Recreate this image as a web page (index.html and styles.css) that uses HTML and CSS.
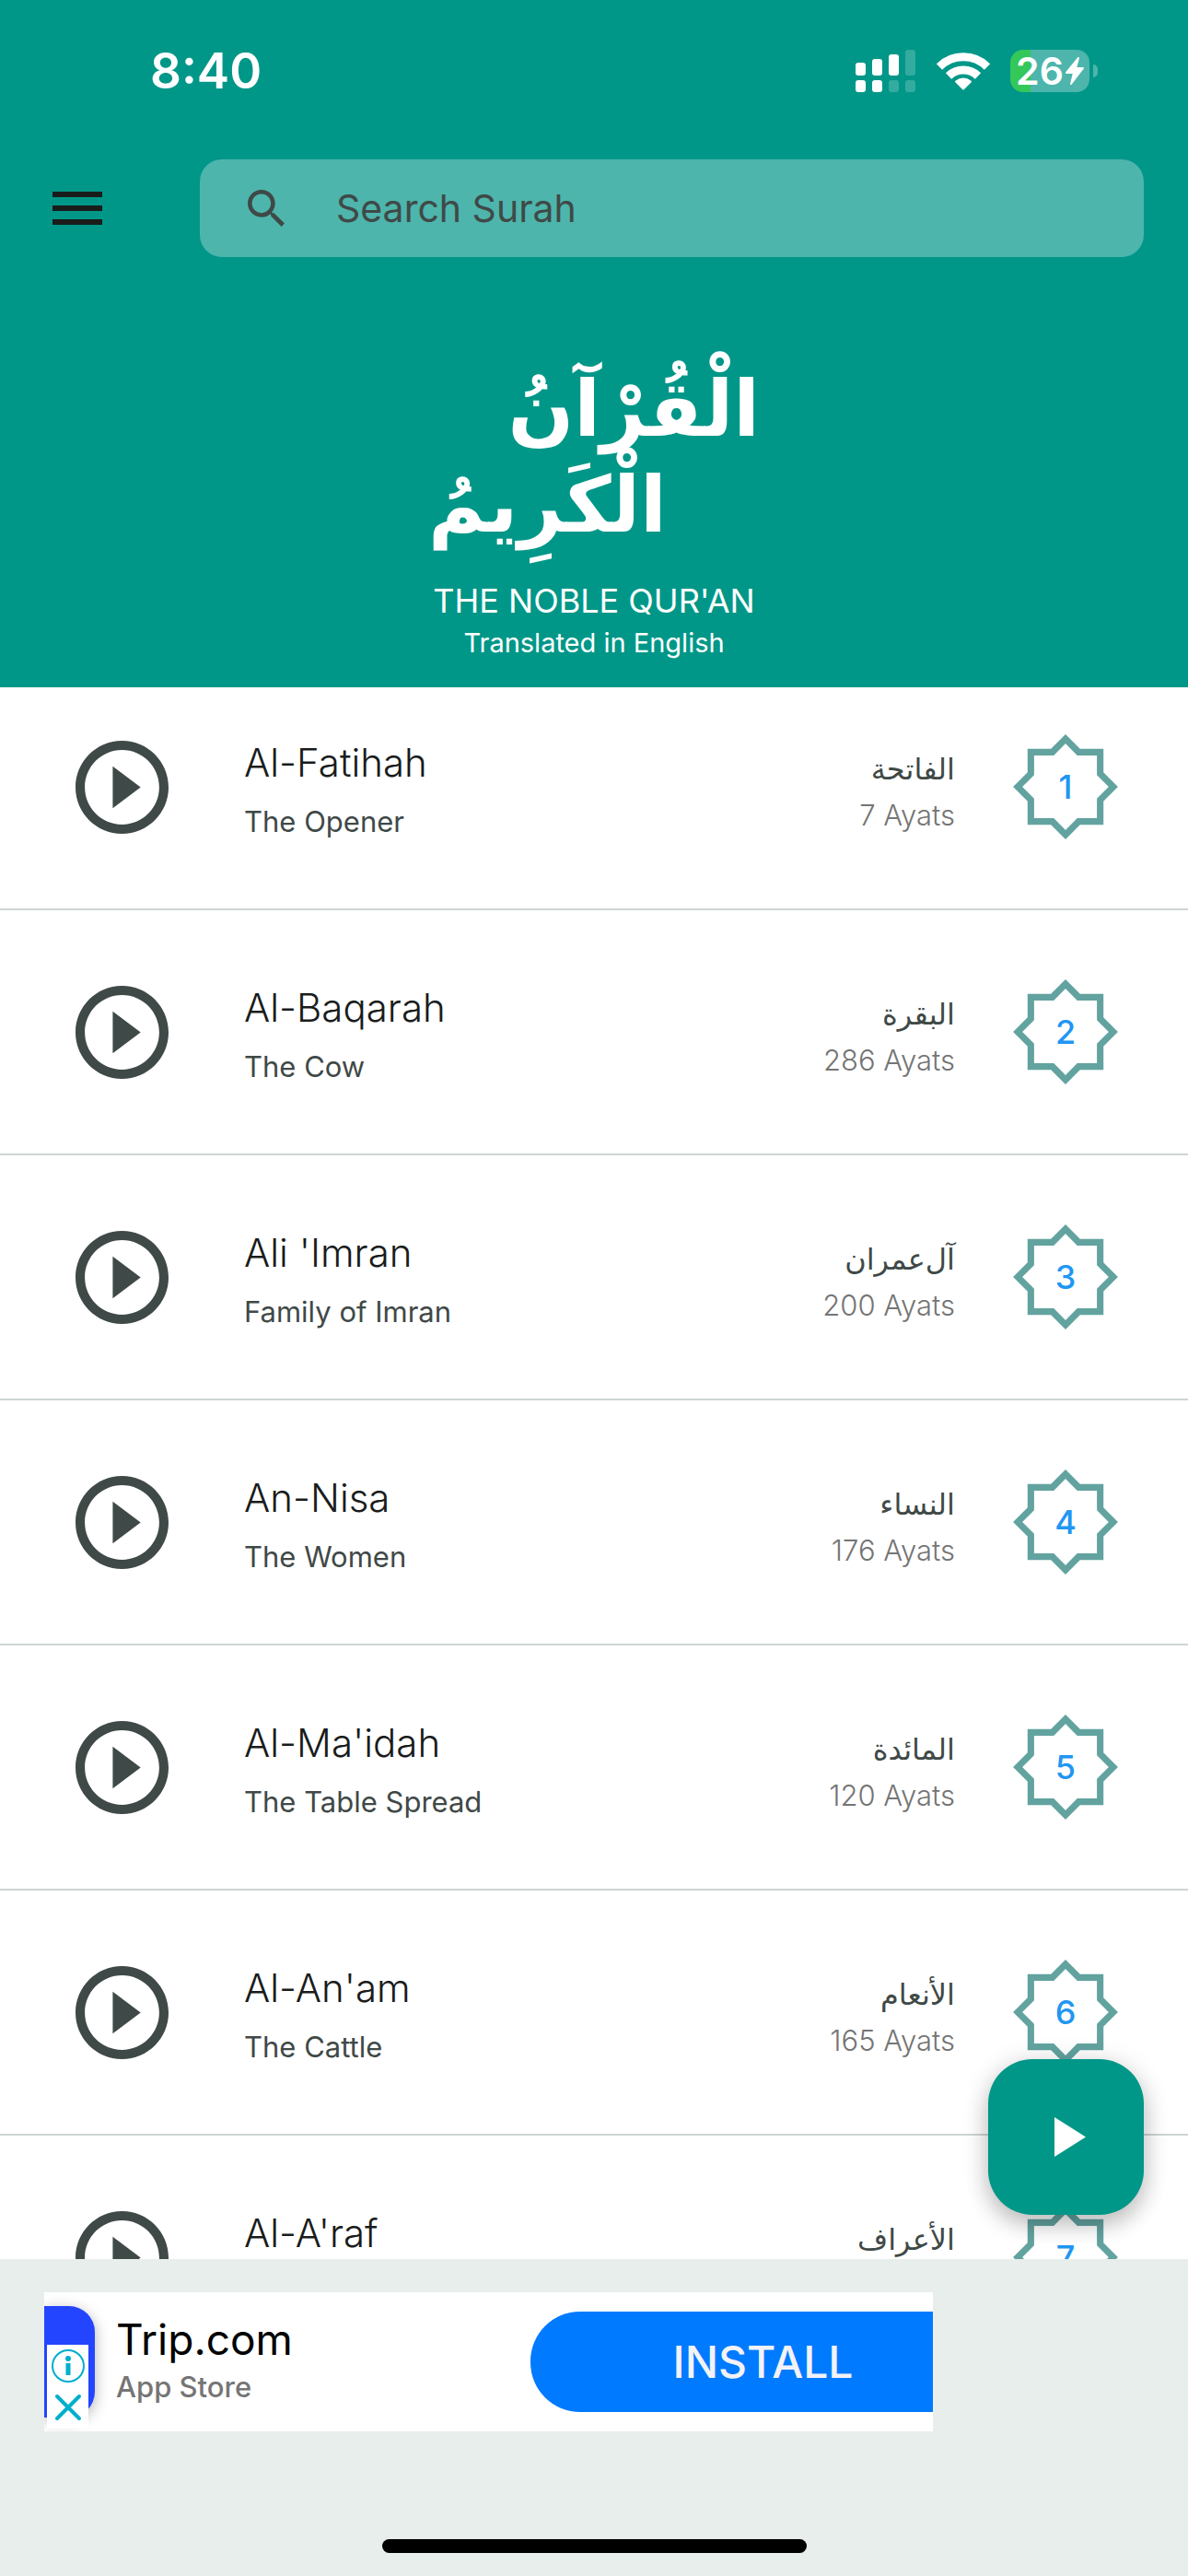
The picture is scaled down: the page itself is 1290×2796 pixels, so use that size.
FILE: index.html
```
<!DOCTYPE html>
<html lang="en">
<head>
    <meta charset="UTF-8">
    <meta name="viewport" content="width=device-width, initial-scale=1.0">
    <title>The Noble Qur'an</title>
    <link rel="stylesheet" href="styles.css">
</head>
<body>
    <!-- shared icons -->
    <svg class="sprite" aria-hidden="true">
        <symbol id="play-circle" viewBox="2 2 20 20">
            <path d="M10 16.5l6-4.5-6-4.5v9zM12 2C6.48 2 2 6.48 2 12s4.48 10 10 10 10-4.48 10-10S17.52 2 12 2zm0 18c-4.41 0-8-3.59-8-8s3.59-8 8-8 8 3.59 8 8-3.59 8-8 8z"/>
        </symbol>
        <symbol id="star" viewBox="0 0 112 112">
            <polygon points="56,5 70,19 93,19 93,42 107,56 93,70 93,93 70,93 56,107 42,93 19,93 19,70 5,56 19,42 19,19 42,19" fill="none" stroke="#62a3a0" stroke-width="7"/>
        </symbol>
    </svg>

    <header class="header">
        <div class="status-bar">
            <span class="clock">8:40</span>
            <div class="status-icons">
                <svg class="signal" viewBox="0 0 66 46" fill="#fff">
                    <rect x="0" y="14" width="11" height="14" rx="3"/>
                    <rect x="18" y="10" width="11" height="18" rx="3"/>
                    <rect x="36" y="5" width="11" height="23" rx="3"/>
                    <rect x="54" y="0" width="11" height="28" rx="3" opacity=".2"/>
                    <rect x="0" y="33" width="11" height="13" rx="3"/>
                    <rect x="18" y="33" width="11" height="13" rx="3"/>
                    <rect x="36" y="33" width="11" height="13" rx="3" opacity=".2"/>
                    <rect x="54" y="33" width="11" height="13" rx="3" opacity=".2"/>
                </svg>
                <svg class="wifi" viewBox="0 0 58 43" fill="none" stroke="#fff" stroke-width="9">
                    <path d="M3 17.5A37 37 0 0 1 55 17.5"/>
                    <path d="M13 27.500A23 23 0 0 1 45 27.500"/>
                    <path d="M29 41.500L21 33.500Q29 27.500 37 33.500Z" fill="#fff" stroke-width="2" stroke-linejoin="round"/>
                </svg>
                <div class="battery">
                    <div class="battery-body">
                        <span>26</span>
                        <svg class="bolt" viewBox="0 0 20 30" fill="#fff" stroke="#fff" stroke-width="2" stroke-linejoin="round"><path d="M14 1L1 17h8L6 29 19 12h-8z"/></svg>
                    </div>
                    <div class="battery-cap"></div>
                </div>
            </div>
        </div>

        <div class="toolbar">
            <button class="menu-button" aria-label="Menu">
                <svg viewBox="0 0 54 36" fill="#191c1b"><path d="M0 0h54v6H0zM0 15h54v6H0zM0 30h54v6H0z"/></svg>
            </button>
            <label class="search">
                <svg class="search-icon" viewBox="3 3 17.500 17.500" fill="#3f4947"><path d="M15.500 14h-.79l-.28-.27C15.410 12.590 16 11.110 16 9.500 16 5.910 13.090 3 9.500 3S3 5.910 3 9.500 5.910 16 9.500 16c1.610 0 3.090-.59 4.230-1.570l.27.28v.79l5 4.990L20.490 19l-4.990-5zm-6 0C7.010 14 5 11.990 5 9.500S7.010 5 9.500 5 14 7.010 14 9.500 11.990 14 9.500 14z"/></svg>
                <input type="text" placeholder="Search Surah" aria-label="Search Surah">
            </label>
        </div>

        <div class="brand">
            <div class="calligraphy" lang="ar" dir="rtl">
                <span class="word">الْقُرْآنُ</span>
                <span class="word word-end">الْكَرِيمُ</span>
            </div>
            <h1>THE NOBLE QUR'AN</h1>
            <p>Translated in English</p>
        </div>
    </header>

    <main class="content">
        <ul class="surah-list">
            <li class="surah">
                <button class="play" aria-label="Play Al-Fatihah"><svg><use href="#play-circle"/></svg></button>
                <div class="name"><h2>Al-Fatihah</h2><p>The Opener</p></div>
                <div class="arabic"><p lang="ar" dir="rtl">الفاتحة</p><small>7 Ayats</small></div>
                <div class="number"><svg><use href="#star"/></svg><span>1</span></div>
            </li>
            <li class="surah">
                <button class="play" aria-label="Play Al-Baqarah"><svg><use href="#play-circle"/></svg></button>
                <div class="name"><h2>Al-Baqarah</h2><p>The Cow</p></div>
                <div class="arabic"><p lang="ar" dir="rtl">البقرة</p><small>286 Ayats</small></div>
                <div class="number"><svg><use href="#star"/></svg><span>2</span></div>
            </li>
            <li class="surah">
                <button class="play" aria-label="Play Ali 'Imran"><svg><use href="#play-circle"/></svg></button>
                <div class="name"><h2>Ali 'Imran</h2><p>Family of Imran</p></div>
                <div class="arabic"><p lang="ar" dir="rtl">آل&zwnj;عمران</p><small>200 Ayats</small></div>
                <div class="number"><svg><use href="#star"/></svg><span>3</span></div>
            </li>
            <li class="surah">
                <button class="play" aria-label="Play An-Nisa"><svg><use href="#play-circle"/></svg></button>
                <div class="name"><h2>An-Nisa</h2><p>The Women</p></div>
                <div class="arabic"><p lang="ar" dir="rtl">النساء</p><small>176 Ayats</small></div>
                <div class="number"><svg><use href="#star"/></svg><span>4</span></div>
            </li>
            <li class="surah">
                <button class="play" aria-label="Play Al-Ma'idah"><svg><use href="#play-circle"/></svg></button>
                <div class="name"><h2>Al-Ma'idah</h2><p>The Table Spread</p></div>
                <div class="arabic"><p lang="ar" dir="rtl">المائدة</p><small>120 Ayats</small></div>
                <div class="number"><svg><use href="#star"/></svg><span>5</span></div>
            </li>
            <li class="surah">
                <button class="play" aria-label="Play Al-An'am"><svg><use href="#play-circle"/></svg></button>
                <div class="name"><h2>Al-An'am</h2><p>The Cattle</p></div>
                <div class="arabic"><p lang="ar" dir="rtl">الأنعام</p><small>165 Ayats</small></div>
                <div class="number"><svg><use href="#star"/></svg><span>6</span></div>
            </li>
            <li class="surah">
                <button class="play" aria-label="Play Al-A'raf"><svg><use href="#play-circle"/></svg></button>
                <div class="name"><h2>Al-A'raf</h2></div>
                <div class="arabic"><p lang="ar" dir="rtl">الأعراف</p></div>
                <div class="number"><svg><use href="#star"/></svg><span>7</span></div>
            </li>
        </ul>
        <button class="fab" aria-label="Play">
            <svg viewBox="0 0 34 43" fill="#fff"><path d="M0 0l34 21.500L0 43z"/></svg>
        </button>
    </main>

    <footer class="footer">
        <div class="ad">
            <div class="ad-logo">
                <div class="ad-choices">
                    <svg viewBox="0 0 36 36" fill="none" stroke="#00aecd" stroke-width="2"><circle cx="18" cy="18" r="17"/><circle cx="18" cy="10" r="3" fill="#00aecd" stroke="none"/><path d="M18 15v13" stroke-width="5"/></svg>
                    <svg viewBox="0 0 36 36" fill="none" stroke="#00aecd" stroke-width="4" stroke-linecap="round"><path d="M6 6l24 24M30 6L6 30"/></svg>
                </div>
            </div>
            <div class="ad-text">
                <strong>Trip.com</strong>
                <span>App Store</span>
            </div>
            <button class="install">INSTALL</button>
        </div>
        <div class="home-indicator"></div>
    </footer>
</body>
</html>
```

FILE: styles.css
```
* {
    box-sizing: border-box;
    margin: 0;
    padding: 0;
}

body {
    display: flex;
    flex-direction: column;
    height: 100vh;
    background-color: #fff;
    font-family: Inter, "DejaVu Sans", sans-serif;
    color: #191c1b;
}

button {
    border: none;
    background: none;
    font-family: inherit;
    cursor: pointer;
}

svg {
    display: block;
}

.sprite {
    position: absolute;
    width: 0;
    height: 0;
}

/* header */
.header {
    flex: none;
    padding-bottom: 29px;
    background-color: #009788;
    color: #fff;
}

.status-bar {
    display: flex;
    justify-content: space-between;
    align-items: center;
    height: 153px;
    padding: 0 98px 0 163px;
}

.clock {
    font-size: 53px;
    font-weight: 600;
}

.status-icons {
    display: flex;
    align-items: center;
    gap: 22px;
}

.signal {
    width: 66px;
    height: 46px;
}

.wifi {
    width: 58px;
    height: 43px;
}

.battery {
    display: flex;
    align-items: center;
    gap: 4px;
}

.battery-body {
    display: flex;
    justify-content: center;
    align-items: center;
    gap: 2px;
    width: 86px;
    height: 46px;
    border-radius: 14px;
    background: linear-gradient(to right, #34c759 26%, #4db5ac 26%);
    font-size: 41px;
    line-height: 46px;
    font-weight: 600;
}

.bolt {
    width: 20px;
    height: 30px;
}

.battery-cap {
    width: 5px;
    height: 14px;
    border-radius: 0 7px 7px 0;
    background-color: #4db5ac;
}

.toolbar {
    display: flex;
    align-items: center;
    gap: 106px;
    padding: 20px 48px 0 57px;
}

.menu-button svg {
    width: 54px;
    height: 36px;
}

.search {
    display: flex;
    flex: 1;
    align-items: center;
    gap: 56px;
    height: 106px;
    padding: 0 52px;
    border-radius: 24px;
    background-color: #4db5ac;
}

.search-icon {
    width: 40px;
    height: 40px;
}

.search input {
    flex: 1;
    border: none;
    outline: none;
    background: none;
    font-family: inherit;
    font-size: 41px;
    color: #3f4947;
}

.search input::placeholder {
    color: #3f4947;
}

.brand {
    display: flex;
    flex-direction: column;
    align-items: center;
    padding-top: 113px;
}

/* two words set on a diagonal */
.calligraphy {
    display: flex;
    flex-direction: column;
    width: 360px;
    height: 234px;
    font-family: "DejaVu Sans", sans-serif;
    font-size: 84px;
    line-height: 104px;
    font-weight: 700;
    white-space: nowrap;
}

.word {
    align-self: flex-start;
}

.word-end {
    align-self: flex-end;
}

.brand h1 {
    font-size: 36px;
    line-height: 52px;
    font-weight: 400;
}

.brand p {
    font-size: 29px;
    line-height: 39px;
}

/* surah list */
.content {
    position: relative;
    flex: 1;
    min-height: 0;
}

.surah-list {
    height: 100%;
    overflow: hidden;
    list-style: none;
}

.surah {
    display: flex;
    align-items: center;
    height: 266px;
    padding: 0 76px 0 82px;
    border-bottom: 2px solid #cdd6d4;
}

/* the first row sits closer to the header */
.surah:first-child {
    height: 242px;
    padding-bottom: 24px;
}

.play svg {
    width: 101px;
    height: 101px;
    fill: #3f4947;
}

.name {
    flex: 1;
    height: 112px;
    margin-left: 82px;
}

.name h2 {
    font-size: 42px;
    line-height: 60px;
    font-weight: 300;
}

.name p {
    font-size: 31px;
    line-height: 68px;
    color: #3f4947;
}

.arabic {
    height: 100px;
    text-align: right;
}

.arabic p {
    font-family: "DejaVu Sans", sans-serif;
    font-size: 32px;
    line-height: 62px;
    color: #3f4947;
}

.arabic small {
    display: block;
    font-size: 31px;
    line-height: 38px;
    font-weight: 300;
    color: #757575;
}

.number {
    display: grid;
    place-items: center;
    margin-left: 63px;
    font-size: 36px;
    font-weight: 500;
    color: #2196f3;
}

.number svg,
.number span {
    grid-area: 1 / 1;
}

.number svg {
    width: 114px;
    height: 114px;
}

.fab {
    position: absolute;
    right: 48px;
    bottom: 48px;
    display: flex;
    justify-content: center;
    align-items: center;
    width: 169px;
    height: 169px;
    padding-left: 8px;
    border-radius: 48px;
    background-color: #009788;
    box-shadow: 0 12px 24px rgba(0, 0, 0, .2), 0 2px 30px rgba(0, 0, 0, .12);
}

.fab svg {
    width: 34px;
    height: 43px;
}

/* ad banner */
.footer {
    display: flex;
    flex: none;
    flex-direction: column;
    justify-content: space-between;
    height: 344px;
    padding: 36px 48px 25px;
    background-color: #e8eeec;
}

.ad {
    display: flex;
    align-items: center;
    width: 965px;
    height: 151px;
    background-color: #fff;
    overflow: hidden;
}

.ad-logo {
    display: flex;
    align-items: flex-end;
    width: 55px;
    height: 121px;
    padding-left: 3px;
    border-radius: 0 28px 28px 0;
    background-color: #2445ff;
    box-shadow: 0 4px 16px rgba(0, 0, 0, .3);
}

.ad-choices {
    display: flex;
    flex-direction: column;
    flex: none;
    align-items: center;
    gap: 9px;
    width: 45px;
    height: 91px;
    margin-bottom: -12px;
    padding-top: 5px;
    background-color: #fff;
}

.ad-choices svg {
    width: 36px;
    height: 36px;
}

.ad-text {
    display: flex;
    flex: 1;
    flex-direction: column;
    padding-left: 23px;
}

.ad-text strong {
    font-size: 46px;
    line-height: 54px;
    font-weight: 400;
    color: #000;
}

.ad-text span {
    font-size: 31px;
    line-height: 50px;
    font-weight: 500;
    color: #757575;
}

.install {
    width: 437px;
    height: 109px;
    padding-left: 68px;
    border-radius: 54px 0 0 54px;
    background-color: #007aff;
    font-size: 48px;
    font-weight: 500;
    color: #f2f2f7;
}

.home-indicator {
    align-self: center;
    width: 461px;
    height: 15px;
    border-radius: 8px;
    background-color: #000;
}
```
